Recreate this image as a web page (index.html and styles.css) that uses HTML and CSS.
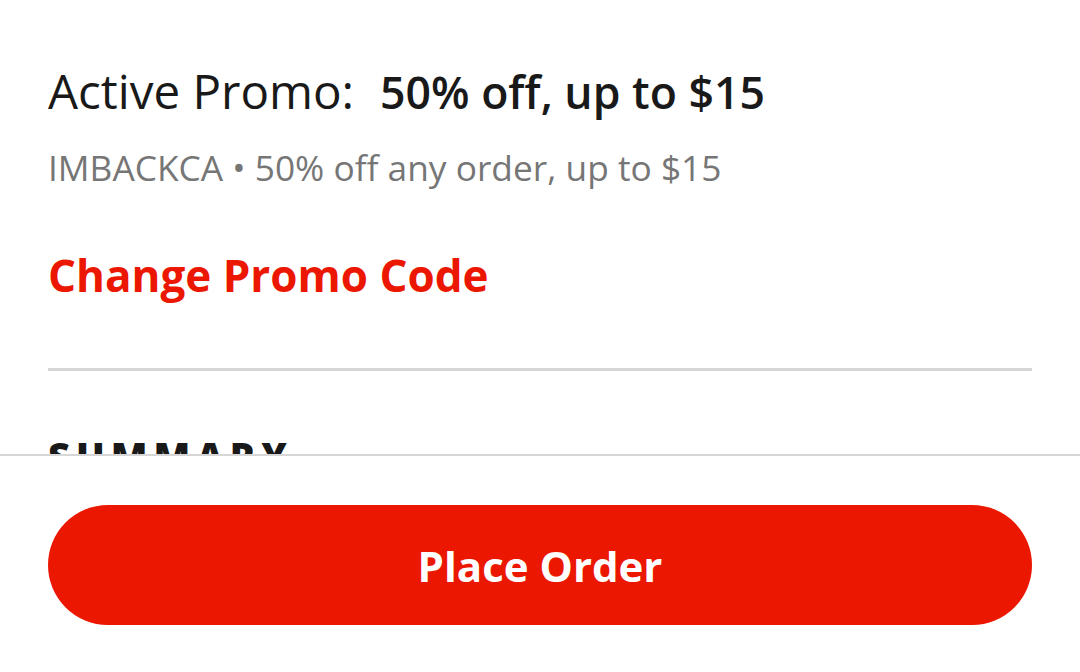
FILE: index.html
```html
<!DOCTYPE html>
<html lang="en">
<head>
<meta charset="utf-8">
<link rel="stylesheet" href="styles.css">
</head>
<body>
<div class="screen">
  <main class="scroll">
    <p class="promo-line"><span class="promo-label">Active Promo:</span><span class="promo-value">50% off, up to $15</span></p>
    <p class="promo-sub">IMBACKCA • 50% off any order, up to $15</p>
    <p class="promo-action"><a class="promo-change">Change Promo Code</a></p>
    <hr class="divider">
    <h2 class="section-title">SUMMARY</h2>
  </main>
  <footer class="footer">
    <button class="place-order">Place Order</button>
  </footer>
</div>
</body>
</html>
```

FILE: styles.css
```css
* { box-sizing: border-box; }
html, body { margin: 0; padding: 0; background: #fff; }
body { font-family: "Open Sans", sans-serif; color: #191919; }
.screen { width: 1080px; height: 672px; display: flex; flex-direction: column; overflow: hidden; }
.scroll { flex: 0 0 454px; overflow: hidden; padding: 0 48px; }
.promo-line { margin: 61px 0 0; font-size: 48px; line-height: 60px; white-space: nowrap; }
.promo-label { font-weight: 400; font-size: 47.5px; }
.promo-value { font-weight: 600; font-size: 44.6px; margin-left: 26px; }
.promo-sub { margin: 25px 0 0; font-size: 35.3px; line-height: 40px; color: #767676; white-space: nowrap; }
.promo-action { margin: 60px 0 0; font-size: 44px; line-height: 56px; }
.promo-change { font-weight: 700; color: #eb1700; }
.divider { margin: 65px 0 0; border: 0; height: 3px; background: #d6d6d6; }
.section-title { margin: 63px 0 0; font-size: 38px; line-height: 44px; font-weight: 800; letter-spacing: 6px; }
.footer { flex: 1; border-top: 2px solid #d6d6d6; padding: 49px 48px 0; }
.place-order { display: block; width: 100%; height: 120px; border: 0; border-radius: 60px; background: #eb1700; color: #fff; font-family: "Open Sans", sans-serif; font-size: 42px; font-weight: 700; }
```
